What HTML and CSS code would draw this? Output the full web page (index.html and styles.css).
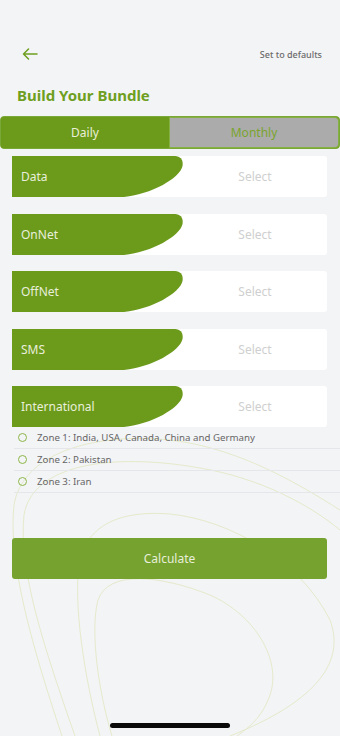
FILE: index.html
```html
<!DOCTYPE html>
<html lang="en">
<head>
<meta charset="utf-8">
<meta name="viewport" content="width=340">
<title>Build Your Bundle</title>
<link rel="stylesheet" href="styles.css">
</head>
<body>
<div class="screen">
  <svg class="deco" width="340" height="736" viewBox="0 0 340 736" fill="none" stroke="#e5eacb" stroke-width="1">
    <path d="M62 736 C30 640 8 560 14 505 C22 455 90 432 170 440 C240 448 300 485 340 510"/>
    <path d="M75 736 C45 650 18 570 24 515 C32 465 110 452 200 468 C260 478 310 505 340 530"/>
    <path d="M100 736 C85 680 72 600 80 560 C88 525 120 510 170 514 C230 520 300 560 330 620 C345 660 320 700 230 736"/>
    <path d="M112 736 C98 690 90 630 98 600 C108 570 160 575 210 595 C255 615 282 660 270 695 C262 718 248 728 237 736"/>
  </svg>

  <div class="page">
    <header class="topbar">
      <svg class="back" width="16" height="12" viewBox="0 0 16 12" fill="none" stroke="#6e9f1f" stroke-width="1.5" stroke-linecap="round" stroke-linejoin="round">
        <path d="M15 6 H1.5 M6.5 1 L1.5 6 L6.5 11"/>
      </svg>
      <span class="defaults">Set to defaults</span>
    </header>

    <h1 class="title">Build Your Bundle</h1>

    <div class="tabs">
      <div class="tab tab-active">Daily</div>
      <div class="tab tab-idle">Monthly</div>
    </div>

    <div class="rows">
      <div class="row">
        <div class="row-label">
          <svg class="shape" width="171" height="41" viewBox="0 0 171 41" preserveAspectRatio="none"><path d="M0 0 H163 C169 0 171.5 5 170.5 10 C168 22 140 38 112 41 H0 Z" fill="#6c9a1b"/></svg>
          <span class="label-text">Data</span>
        </div>
        <div class="select">Select</div>
      </div>
      <div class="row">
        <div class="row-label">
          <svg class="shape" width="171" height="41" viewBox="0 0 171 41" preserveAspectRatio="none"><path d="M0 0 H163 C169 0 171.5 5 170.5 10 C168 22 140 38 112 41 H0 Z" fill="#6c9a1b"/></svg>
          <span class="label-text">OnNet</span>
        </div>
        <div class="select">Select</div>
      </div>
      <div class="row">
        <div class="row-label">
          <svg class="shape" width="171" height="41" viewBox="0 0 171 41" preserveAspectRatio="none"><path d="M0 0 H163 C169 0 171.5 5 170.5 10 C168 22 140 38 112 41 H0 Z" fill="#6c9a1b"/></svg>
          <span class="label-text">OffNet</span>
        </div>
        <div class="select">Select</div>
      </div>
      <div class="row">
        <div class="row-label">
          <svg class="shape" width="171" height="41" viewBox="0 0 171 41" preserveAspectRatio="none"><path d="M0 0 H163 C169 0 171.5 5 170.5 10 C168 22 140 38 112 41 H0 Z" fill="#6c9a1b"/></svg>
          <span class="label-text">SMS</span>
        </div>
        <div class="select">Select</div>
      </div>
      <div class="row">
        <div class="row-label">
          <svg class="shape" width="171" height="41" viewBox="0 0 171 41" preserveAspectRatio="none"><path d="M0 0 H163 C169 0 171.5 5 170.5 10 C168 22 140 38 112 41 H0 Z" fill="#6c9a1b"/></svg>
          <span class="label-text">International</span>
        </div>
        <div class="select">Select</div>
      </div>
    </div>

    <ul class="zones">
      <li class="zone"><span class="radio"></span>Zone 1: India, USA, Canada, China and Germany</li>
      <li class="zone"><span class="radio"></span>Zone 2: Pakistan</li>
      <li class="zone"><span class="radio"></span>Zone 3: Iran</li>
    </ul>

    <div class="calc-wrap">
      <button class="calc">Calculate</button>
    </div>
  </div>

  <div class="home-indicator"></div>
</div>
</body>
</html>
```

FILE: styles.css
```css
* { box-sizing: border-box; }

html, body {
  margin: 0;
  padding: 0;
}

body {
  background: #f3f4f6;
  font-family: "Noto Sans", "Open Sans", sans-serif;
}

.screen {
  position: relative;
  width: 340px;
  height: 736px;
  overflow: hidden;
  background: #f3f4f6;
}

.deco {
  position: absolute;
  left: 0;
  top: 0;
  z-index: 0;
}

.page {
  position: relative;
  z-index: 1;
  padding-top: 46px;
}

.topbar {
  display: flex;
  align-items: center;
  justify-content: space-between;
  height: 16px;
  padding: 0 18px 0 22px;
}

.back { display: block; }

.defaults {
  font-size: 9px;
  font-weight: 500;
  color: #6b6b6b;
}

.title {
  margin: 23px 0 0 17px;
  font-size: 15px;
  line-height: 20px;
  font-weight: 700;
  color: #6e9f1f;
}

.tabs {
  display: flex;
  margin-top: 11px;
  height: 33px;
  border: 1px solid #7aa836;
  border-radius: 4px;
  overflow: hidden;
  background: #6c9a1b;
}

.tab {
  flex: 1;
  display: flex;
  align-items: center;
  justify-content: center;
  font-size: 12px;
}

.tab-active {
  background: #6c9a1b;
  color: #e9f0da;
}

.tab-idle {
  background: #ababab;
  color: #7aa42e;
  border: 1px solid #86b043;
  border-radius: 0 4px 4px 0;
}

.rows {
  display: flex;
  flex-direction: column;
  gap: 16.5px;
  margin-top: 7px;
  padding: 0 13px 0 12px;
}

.row {
  display: flex;
  height: 41px;
  background: #ffffff;
  border-radius: 3px;
}

.row-label {
  display: grid;
  width: 171px;
  flex-shrink: 0;
}

.shape,
.label-text {
  grid-area: 1 / 1;
}

.shape { display: block; }

.label-text {
  align-self: center;
  padding-left: 9px;
  font-size: 12px;
  color: #e8efdc;
}

.select {
  flex: 1;
  display: flex;
  align-items: center;
  justify-content: center;
  font-size: 12px;
  color: #cfcfcf;
}

.zones {
  list-style: none;
  margin: 0;
  padding: 0 0 0 14px;
}

.zone {
  display: flex;
  align-items: center;
  height: 22px;
  border-bottom: 1px solid #e4e6e9;
  font-size: 9.7px;
  color: #666666;
}

.radio {
  width: 9px;
  height: 9px;
  margin: 0 10.5px 0 3.5px;
  border: 1.3px solid #8db648;
  border-radius: 50%;
  flex-shrink: 0;
}

.calc-wrap {
  padding: 45px 13px 0 12px;
}

.calc {
  display: block;
  width: 100%;
  height: 41px;
  border: 0;
  border-radius: 3px;
  background: #76a230;
  color: #e8efda;
  font-family: inherit;
  font-size: 12px;
}

.home-indicator {
  position: absolute;
  left: 110px;
  bottom: 8px;
  width: 120px;
  height: 5px;
  border-radius: 3px;
  background: #0a0a0a;
  z-index: 2;
}
```
